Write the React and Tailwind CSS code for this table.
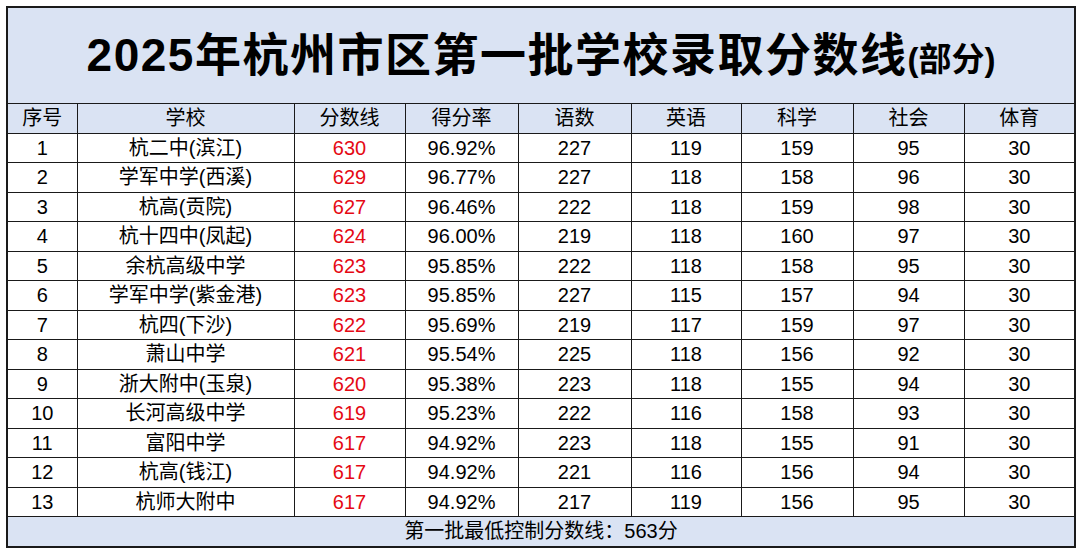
const rows = [
  ['1', '杭二中(滨江)', '630', '96.92%', '227', '119', '159', '95', '30'],
  ['2', '学军中学(西溪)', '629', '96.77%', '227', '118', '158', '96', '30'],
  ['3', '杭高(贡院)', '627', '96.46%', '222', '118', '159', '98', '30'],
  ['4', '杭十四中(凤起)', '624', '96.00%', '219', '118', '160', '97', '30'],
  ['5', '余杭高级中学', '623', '95.85%', '222', '118', '158', '95', '30'],
  ['6', '学军中学(紫金港)', '623', '95.85%', '227', '115', '157', '94', '30'],
  ['7', '杭四(下沙)', '622', '95.69%', '219', '117', '159', '97', '30'],
  ['8', '萧山中学', '621', '95.54%', '225', '118', '156', '92', '30'],
  ['9', '浙大附中(玉泉)', '620', '95.38%', '223', '118', '155', '94', '30'],
  ['10', '长河高级中学', '619', '95.23%', '222', '116', '158', '93', '30'],
  ['11', '富阳中学', '617', '94.92%', '223', '118', '155', '91', '30'],
  ['12', '杭高(钱江)', '617', '94.92%', '221', '116', '156', '94', '30'],
  ['13', '杭师大附中', '617', '94.92%', '217', '119', '156', '95', '30'],
]

const heads = ['序号', '学校', '分数线', '得分率', '语数', '英语', '科学', '社会', '体育']
const widths = ['w-[70px]', 'w-[217px]', 'w-[111px]', 'w-[113px]', 'w-[113px]', 'w-[110px]', 'w-[112px]', 'w-[111px]', 'w-[111px]']

export default function App() {
  return (
    <div className="w-[1080px] h-[552px] bg-white p-[6px] text-black font-['Liberation_Sans','Noto_Sans_CJK_SC',sans-serif]">
      <table className="w-[1068px] table-fixed border-collapse border-2 border-[#1a1a1a] text-[20px] leading-none">
        <colgroup>
          {widths.map((w, i) => <col key={i} className={w} />)}
        </colgroup>
        <thead>
          <tr className="h-[96px] bg-[#dae3f3]">
            <th colSpan={9} className="border border-[#1a1a1a] text-center font-bold">
              <span className="text-[46px] tracking-[1.5px]">2025年杭州市区第一批学校录取分数线</span>
              <span className="text-[33px]">(部分)</span>
            </th>
          </tr>
          <tr className="h-[30px] bg-[#dae3f3]">
            {heads.map(h => (
              <th key={h} className="border border-[#1a1a1a] text-center font-normal">{h}</th>
            ))}
          </tr>
        </thead>
        <tbody>
          {rows.map(r => (
            <tr key={r[0]} className="h-[29.5px]">
              {r.map((c, i) => (
                <td key={i} className={`border border-[#1a1a1a] text-center ${i === 2 ? 'text-[#e50914]' : ''}`}>{c}</td>
              ))}
            </tr>
          ))}
          <tr className="h-[30px] bg-[#dae3f3]">
            <td colSpan={9} className="border border-[#1a1a1a] text-center">第一批最低控制分数线：563分</td>
          </tr>
        </tbody>
      </table>
    </div>
  )
}
